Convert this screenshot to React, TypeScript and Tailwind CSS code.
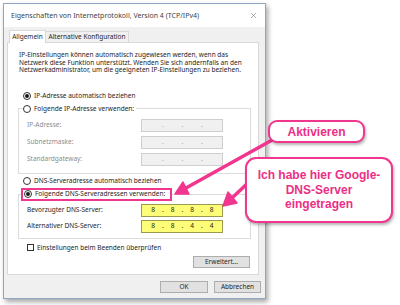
import { X } from 'lucide-react'

function Radio({ checked }: { checked?: boolean }) {
  return (
    <span className="w-[8px] h-[8px] rounded-full border border-[#333] bg-white flex items-center justify-center shrink-0">
      {checked && <span className="w-[4px] h-[4px] rounded-full bg-[#1a1a1a]" />}
    </span>
  )
}

function IpBox({ values, yellow }: { values?: string[]; yellow?: boolean }) {
  const cells = values ?? ['', '', '', '']
  return (
    <div
      className={
        yellow
          ? 'w-[82px] h-[13px] border border-[#9a9a50] bg-[#fdfd78] flex items-center pl-[3.5px] text-[#1a1a1a]'
          : 'w-[82px] h-[13px] border border-[#cfcfcf] bg-[#f0f0f0] flex items-center pl-[3.5px] text-[#9a9a9a]'
      }
    >
      {cells.map((v, i) => (
        <div key={i} className="flex items-center">
          <span className="w-[15px] text-center">{v}</span>
          {i < 3 && <span className="w-[4.5px] text-center">.</span>}
        </div>
      ))}
    </div>
  )
}

function Row({ label, children, disabled }: { label: string; children: React.ReactNode; disabled?: boolean }) {
  return (
    <div className="flex items-center h-[13px]">
      <span className={disabled ? 'w-[114px] text-[#8d8d8d]' : 'w-[114px]'}>{label}</span>
      {children}
    </div>
  )
}

function Button({ label, w }: { label: string; w: string }) {
  return (
    <div className={`${w} h-[12px] border border-[#adadad] bg-[#e1e1e1] flex items-center justify-center`}>{label}</div>
  )
}

export default function App() {
  return (
    <div className="relative w-[400px] h-[305px] bg-white overflow-hidden whitespace-nowrap font-['Noto_Sans',sans-serif] text-[6.5px] leading-[8px] text-[#1e1e1e]">
      <div className="ml-[3px] mt-[3px] w-[263px] h-[296px] border border-[#8ea5c3] bg-[#f0f0f0] shadow-[2px_3px_5px_rgba(0,0,0,0.35)] flex flex-col">
        {/* title bar */}
        <div className="h-[23px] bg-white flex items-center justify-between pl-[7px] pr-[7px] shrink-0">
          <span className="text-[#444] text-[7px]">Eigenschaften von Internetprotokoll, Version 4 (TCP/IPv4)</span>
          <X className="w-[9px] h-[9px] text-[#555]" strokeWidth={1.2} />
        </div>

        <div className="pl-[3px] pt-[2px]">
          {/* tabs */}
          <div className="flex items-end pl-[2px] h-[13px]">
            <div className="h-[13px] w-[37px] bg-white border border-b-0 border-[#d9d9d9] flex items-center justify-center relative top-[1px] z-10">
              Allgemein
            </div>
            <div className="h-[11px] w-[83px] bg-[#f0f0f0] border border-b-0 border-l-0 border-[#d9d9d9] flex items-center justify-center">
              Alternative Konfiguration
            </div>
          </div>

          {/* tab panel */}
          <div className="w-[252px] h-[233px] bg-white border border-[#d9d9d9] flex flex-col pl-[10px]">
            <p className="mt-[8px] ml-[1px] leading-[7.5px]">
              IP-Einstellungen können automatisch zugewiesen werden, wenn das
              <br />
              Netzwerk diese Funktion unterstützt. Wenden Sie sich andernfalls an den
              <br />
              Netzwerkadministrator, um die geeigneten IP-Einstellungen zu beziehen.
            </p>

            <div className="mt-[18px] ml-[5px] flex items-center gap-[3px] h-[8px]">
              <Radio checked />
              <span>IP-Adresse automatisch beziehen</span>
            </div>

            <fieldset className="mt-[5px] w-[233px] border border-[#dcdcdc]">
              <legend className="ml-[4px] pr-[2px]">
                <div className="flex items-center gap-[3px] h-[8px]">
                  <Radio />
                  <span>Folgende IP-Adresse verwenden:</span>
                </div>
              </legend>
              <div className="flex flex-col gap-[4px] pl-[8px] pt-[6px] pb-[7px]">
                <Row label="IP-Adresse:" disabled>
                  <IpBox />
                </Row>
                <Row label="Subnetzmaske:" disabled>
                  <IpBox />
                </Row>
                <Row label="Standardgateway:" disabled>
                  <IpBox />
                </Row>
              </div>
            </fieldset>

            <div className="mt-[3px] ml-[5px] flex items-center gap-[3px] h-[8px]">
              <Radio />
              <span>DNS-Serveradresse automatisch beziehen</span>
            </div>

            <fieldset className="mt-[3px] w-[233px] border border-[#dcdcdc]">
              <legend className="ml-[2px]">
                <div className="flex items-center gap-[3px] h-[13px] w-[151px] border-2 border-[#f0368e] pl-[1px]">
                  <Radio checked />
                  <span>Folgende DNS-Serveradressen verwenden:</span>
                </div>
              </legend>
              <div className="flex flex-col gap-[3px] pl-[8px] pt-[3px] pb-[5px]">
                <Row label="Bevorzugter DNS-Server:">
                  <IpBox yellow values={['8', '8', '8', '8']} />
                </Row>
                <Row label="Alternativer DNS-Server:">
                  <IpBox yellow values={['8', '8', '4', '4']} />
                </Row>
              </div>
            </fieldset>

            <div className="mt-[5px] ml-[9px] flex items-center gap-[3px] h-[8px]">
              <span className="w-[7px] h-[7px] border border-[#333] bg-white shrink-0" />
              <span>Einstellungen beim Beenden überprüfen</span>
            </div>

            <div className="mt-[4px] flex justify-end pr-[8px]">
              <Button label="Erweitert..." w="w-[57px]" />
            </div>
          </div>

          {/* dialog buttons */}
          <div className="mt-[6px] flex justify-end gap-[6px] pr-[4px]">
            <Button label="OK" w="w-[48px]" />
            <Button label="Abbrechen" w="w-[47px]" />
          </div>
        </div>
      </div>

      {/* annotation arrows */}
      <svg className="absolute inset-0 pointer-events-none" width="400" height="305" viewBox="0 0 400 305">
        <line x1="274" y1="139" x2="186" y2="188" stroke="#f0368e" strokeWidth="3.5" strokeLinecap="round" />
        <polygon points="175,194 189,194 183,182" fill="#f0368e" stroke="#f0368e" strokeWidth="1.5" strokeLinejoin="round" />
        <line x1="250" y1="181" x2="232" y2="198" stroke="#f0368e" strokeWidth="3.5" strokeLinecap="round" />
        <polygon points="223,206 237,203 228,192" fill="#f0368e" stroke="#f0368e" strokeWidth="1.5" strokeLinejoin="round" />
      </svg>

      {/* callouts */}
      <div className="absolute left-[268px] top-[120px] w-[97px] h-[23px] rounded-[9px] border-[2.5px] border-[#f0368e] bg-white shadow-[1px_2px_3px_rgba(0,0,0,0.3)] flex items-center justify-center font-['Liberation_Sans',sans-serif] font-bold text-[12px] text-[#ec2f86]">
        Aktivieren
      </div>
      <div className="absolute left-[245px] top-[157px] w-[148px] h-[66px] rounded-[11px] border-[2.5px] border-[#f0368e] bg-white shadow-[1px_2px_3px_rgba(0,0,0,0.3)] flex items-center justify-center text-center font-['Liberation_Sans',sans-serif] font-bold text-[12px] leading-[14.5px] text-[#ec2f86]">
        Ich habe hier Google-
        <br />
        DNS-Server
        <br />
        eingetragen
      </div>
    </div>
  )
}
